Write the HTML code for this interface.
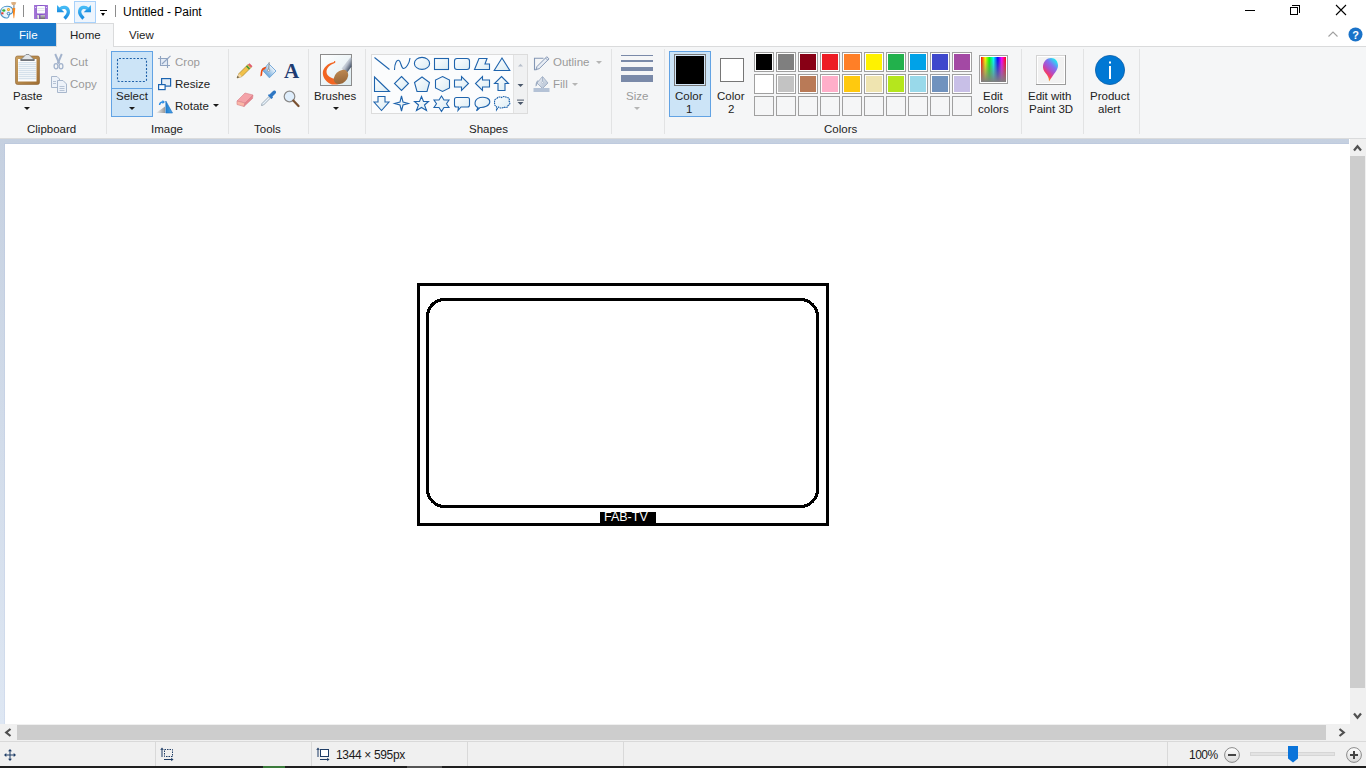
<!DOCTYPE html>
<html><head><meta charset="utf-8">
<style>
*{margin:0;padding:0;box-sizing:border-box}
html,body{width:1366px;height:768px;overflow:hidden;background:#fff;font-family:"Liberation Sans",sans-serif;font-size:11.5px;color:#222}
.a{position:absolute}
.t{position:absolute;white-space:nowrap;line-height:14px}
.sep{position:absolute;width:1px;background:#e2e3e4}
.dis{color:#9a9a9a}
.arr{position:absolute;width:0;height:0;border-left:3px solid transparent;border-right:3px solid transparent;border-top:3px solid #1a1a1a}
.sw{position:absolute;width:20px;height:20px;border:1px solid #a0a0a0;background:#fff;padding:1px}
.sw i{display:block;width:16px;height:16px}
</style></head><body>
<!-- title bar -->
<div class="a" style="left:0;top:0;width:1366px;height:23px;background:#fff"></div>
<div class="t" style="left:123px;top:5px;color:#000;font-size:12px">Untitled - Paint</div>


<!-- qat icons -->
<svg class="a" style="left:0;top:0" width="18" height="20" viewBox="0 0 18 20">
 <path d="M0.6 12 C0.6 8.5 3.5 6.3 7 6.3 C10.5 6.3 12.8 8 12.8 10.8 C12.8 13.5 11 14 9.8 14.3 C8.8 14.6 9.3 16.3 8.2 17.3 C7 18.3 4.3 17.8 2.5 16.5 C1.2 15.5 0.6 13.8 0.6 12Z" fill="#e9f4fc" stroke="#4b94c8" stroke-width="1.1"/>
 <ellipse cx="3.8" cy="10.5" rx="1.6" ry="1.2" fill="#3cb03c"/>
 <circle cx="8.5" cy="9.5" r="1.5" fill="#f2a516"/><circle cx="8.5" cy="9.5" r="0.5" fill="#ffe9a0"/>
 <rect x="1.3" y="12.3" width="2.2" height="2" fill="#e53b2c"/>
 <circle cx="8.5" cy="13.6" r="1.3" fill="none" stroke="#3d7fb8" stroke-width="1"/>
 <path d="M11 2.5 C12 1.8 15.5 1.8 16.3 2.5 L15.5 4.5 C14.5 5.3 12.5 5.3 11.8 4.5Z" fill="#dcae7e"/>
 <rect x="13.3" y="5" width="1.2" height="3" fill="#8a8a8a"/>
 <path d="M12.4 8.3 C13 7.8 14.8 7.8 15.3 8.3 L14.2 18.3 L13.6 18.3Z" fill="#f7861c"/>
</svg>
<div class="a" style="left:23px;top:5px;width:1px;height:12px;background:#8c8c8c"></div>
<svg class="a" style="left:34px;top:5px" width="15" height="15" viewBox="0 0 15 15">
 <defs><linearGradient id="sv" x1="0" y1="0" x2="1" y2="0"><stop offset="0" stop-color="#a77ad8"/><stop offset="0.5" stop-color="#8652c8"/><stop offset="1" stop-color="#a77ad8"/></linearGradient>
 <linearGradient id="sh" x1="0" y1="0" x2="0" y2="1"><stop offset="0" stop-color="#c8c8c8"/><stop offset="1" stop-color="#6a6a6a"/></linearGradient></defs>
 <rect x="0" y="0" width="14" height="14" fill="url(#sv)"/>
 <rect x="3" y="1" width="8" height="7.5" rx="0.8" fill="#fbfbfd"/>
 <rect x="3.5" y="3" width="7" height="0.6" fill="#d2d8e0"/><rect x="3.5" y="5" width="7" height="0.6" fill="#d2d8e0"/>
 <circle cx="1.6" cy="2.5" r="0.6" fill="#f0e8fa"/><circle cx="12.4" cy="2.5" r="0.6" fill="#f0e8fa"/>
 <rect x="3" y="10" width="8" height="4" fill="url(#sh)"/>
 <rect x="3.5" y="10.3" width="1.4" height="3.5" fill="#f0f0f0"/>
 <rect x="5.2" y="10" width="1.2" height="4" fill="#7d4fc0"/>
</svg>
<svg class="a" style="left:56px;top:4px" width="15" height="16" viewBox="0 0 15 16">
 <defs><linearGradient id="ug" x1="0" y1="0" x2="0" y2="1"><stop offset="0" stop-color="#45baf5"/><stop offset="1" stop-color="#1a8ce0"/></linearGradient></defs>
 <path d="M1 1 L1 8.3 L8.3 8.3Z" fill="url(#ug)"/>
 <path d="M4.2 5 C6.5 2.5 11.5 2.8 12.3 7 C12.8 9.8 11 12 8.5 14.5" fill="none" stroke="url(#ug)" stroke-width="3.3"/>
</svg>
<div class="a" style="left:74px;top:1px;width:22px;height:22px;background:#eef5fd;border:1px solid #a9d2fb"></div>
<svg class="a" style="left:77px;top:4px" width="15" height="16" viewBox="0 0 15 16">
 <path d="M14 1 L14 8.3 L6.7 8.3Z" fill="url(#ug)"/>
 <path d="M10.8 5 C8.5 2.5 3.5 2.8 2.7 7 C2.2 9.8 4 12 6.5 14.5" fill="none" stroke="url(#ug)" stroke-width="3.3"/>
</svg>
<div class="a" style="left:100px;top:10px;width:7px;height:1px;background:#000"></div>
<div class="arr" style="left:101px;top:13px;border-left-width:2.5px;border-right-width:2.5px;border-top:3px solid #000"></div>
<div class="a" style="left:115px;top:5px;width:1px;height:12px;background:#8c8c8c"></div>

<!-- window controls -->
<div class="a" style="left:1245px;top:10px;width:10px;height:1px;background:#000"></div>
<div class="a" style="left:1290px;top:7px;width:8px;height:8px;border:1px solid #000"></div>
<div class="a" style="left:1292px;top:5px;width:8px;height:8px;border-top:1px solid #000;border-right:1px solid #000"></div>
<svg class="a" style="left:1335px;top:4px" width="12" height="12" viewBox="0 0 12 12"><path d="M1 1 L11 11 M11 1 L1 11" stroke="#000" stroke-width="1.1"/></svg>
<svg class="a" style="left:1328px;top:31px" width="10" height="6" viewBox="0 0 10 6"><path d="M0.5 5.5 L5 1 L9.5 5.5" fill="none" stroke="#a0a0a0" stroke-width="1.1"/></svg>
<svg class="a" style="left:1348px;top:27px" width="15" height="15" viewBox="0 0 15 15"><circle cx="7.5" cy="7.5" r="7" fill="#1a73c9"/><text x="7.5" y="11.8" text-anchor="middle" font-family="Liberation Sans" font-weight="bold" font-size="11" fill="#fff">?</text></svg>

<!-- tab row -->
<div class="a" style="left:0;top:23px;width:56px;height:23px;background:#1979ca"></div>
<div class="t" style="left:19px;top:28px;color:#fff">File</div>
<div class="a" style="left:56px;top:23px;width:58px;height:24px;background:#f5f6f7;border:1px solid #dadbdc;border-bottom:none"></div>
<div class="t" style="left:70px;top:28px">Home</div>
<div class="t" style="left:129px;top:28px">View</div>

<!-- ribbon -->
<div class="a" style="left:0;top:46px;width:1366px;height:93px;background:#f5f6f7;border-top:1px solid #dadbdc;border-bottom:1px solid #dadbdc"></div>
<div class="a" style="left:57px;top:46px;width:56px;height:1px;background:#f5f6f7"></div>


<!-- ===== Clipboard ===== -->
<svg class="a" style="left:15px;top:54px" width="25" height="31" viewBox="0 0 25 31">
 <defs><linearGradient id="brd" x1="0" y1="0" x2="1" y2="1"><stop offset="0" stop-color="#c9a060"/><stop offset="1" stop-color="#a06e32"/></linearGradient></defs>
 <rect x="0.5" y="2" width="24" height="28.5" rx="2" fill="url(#brd)" stroke="#8d6334" stroke-width="0.6"/>
 <rect x="3" y="5" width="18.5" height="22.5" fill="#fdfdfd"/>
 <g fill="#c3d4e3"><rect x="3.5" y="8.3" width="17.5" height="0.9"/><rect x="3.5" y="10.3" width="17.5" height="0.9"/><rect x="3.5" y="12.3" width="17.5" height="0.9"/><rect x="3.5" y="14.3" width="17.5" height="0.9"/><rect x="3.5" y="16.3" width="17.5" height="0.9"/><rect x="3.5" y="18.3" width="17.5" height="0.9"/><rect x="3.5" y="20.3" width="17.5" height="0.9"/><rect x="3.5" y="22.3" width="17.5" height="0.9"/><rect x="3.5" y="24.3" width="17.5" height="0.9"/></g>
 <path d="M5.5 6 L9 2.5 L11 0.5 L14 0.5 L16 2.5 L19.5 6Z" fill="#e0e4e8" stroke="#6d7378" stroke-width="0.7"/>
 <rect x="5.5" y="5.5" width="14" height="1.2" fill="#4a4f55"/>
</svg>
<svg class="a" style="left:53px;top:53px" width="11" height="17" viewBox="0 0 11 17">
 <g fill="none" stroke="#a3b3cc">
 <path d="M2.2 1 L6.3 10.5" stroke-width="1.9"/><path d="M8.8 1 L4.7 10.5" stroke-width="1.9"/>
 <ellipse cx="3" cy="13.3" rx="1.9" ry="2.6" stroke-width="1.3"/><ellipse cx="8" cy="13.3" rx="1.9" ry="2.6" stroke-width="1.3"/></g>
</svg>
<div class="t dis" style="left:70px;top:55px">Cut</div>
<svg class="a" style="left:51px;top:76px" width="16" height="17" viewBox="0 0 16 17">
 <path d="M0.5 0.5 L6 0.5 L8.5 3 L8.5 11.5 L0.5 11.5Z" fill="#edf2f9" stroke="#a8b7cc" stroke-width="1"/>
 <path d="M6.5 4.5 L12 4.5 L15.5 8 L15.5 16.5 L6.5 16.5Z" fill="#edf2f9" stroke="#a8b7cc" stroke-width="1"/>
 <g fill="#a8b7cc"><rect x="8.5" y="10" width="5" height="0.8"/><rect x="8.5" y="12" width="5" height="0.8"/><rect x="8.5" y="14" width="5" height="0.8"/><rect x="2" y="5" width="3" height="0.8"/><rect x="2" y="7" width="3" height="0.8"/></g>
</svg>
<div class="t dis" style="left:70px;top:77px">Copy</div>
<div class="t" style="left:13px;top:89px">Paste</div>
<div class="arr" style="left:24px;top:107px"></div>
<div class="t" style="left:27px;top:122px">Clipboard</div>
<div class="sep" style="left:106px;top:49px;height:85px"></div>


<!-- ===== Image ===== -->
<div class="a" style="left:111px;top:51px;width:42px;height:66px;background:#cce4f7;border:1px solid #62a3e4"></div>
<div class="a" style="left:112px;top:88px;width:40px;height:1px;background:#62a3e4"></div>
<svg class="a" style="left:116px;top:57px" width="32" height="27" viewBox="0 0 32 27">
 <rect x="1.5" y="1.5" width="29" height="23" rx="1.5" fill="none" stroke="#1d5fa8" stroke-width="1.1" stroke-dasharray="2 1.6"/>
</svg>
<div class="t" style="left:116px;top:89px">Select</div>
<div class="arr" style="left:129px;top:107px"></div>
<svg class="a" style="left:157px;top:55px" width="15" height="14" viewBox="0 0 15 14">
 <rect x="3.5" y="3.5" width="7" height="7" fill="#e3ebf6"/>
 <g stroke="#90a4c1" stroke-width="1.1" fill="none"><path d="M1 3.5 H10.5 V13"/><path d="M3.5 1 V10.5 H13"/><path d="M5 9 L13.5 0.8"/></g>
</svg>
<div class="t dis" style="left:175px;top:55px">Crop</div>
<svg class="a" style="left:157px;top:77px" width="15" height="14" viewBox="0 0 15 14">
 <rect x="4.6" y="1.6" width="9" height="7.5" fill="#e6eff8" stroke="#1c64b0" stroke-width="1.2"/>
 <rect x="1.6" y="7.6" width="6.5" height="5" fill="#fff" stroke="#1c64b0" stroke-width="1.2"/>
</svg>
<div class="t" style="left:175px;top:77px">Resize</div>
<svg class="a" style="left:155px;top:100px" width="18" height="14" viewBox="0 0 18 14">
 <defs><linearGradient id="gt" x1="0" y1="0" x2="1" y2="0"><stop offset="0" stop-color="#f3f3f3"/><stop offset="1" stop-color="#9a9a9a"/></linearGradient>
 <linearGradient id="bt" x1="0" y1="0" x2="1" y2="0"><stop offset="0" stop-color="#1f7fd0"/><stop offset="1" stop-color="#4aa3e8"/></linearGradient></defs>
 <path d="M1 13 L10 6.5 L10 13Z" fill="url(#gt)"/>
 <path d="M10.8 1 L17.5 13 L10.8 13Z" fill="url(#bt)" stroke="#1c6fc0" stroke-width="0.6"/>
 <path d="M4.5 5 C4.8 2.5 6.5 1.8 8.5 2" fill="none" stroke="#2c8ee6" stroke-width="1.4"/>
 <path d="M7.5 0 L10 2 L7.5 4Z" fill="#2c8ee6"/>
</svg>
<div class="t" style="left:175px;top:99px">Rotate</div>
<div class="arr" style="left:213px;top:104px"></div>
<div class="t" style="left:151px;top:122px">Image</div>
<div class="sep" style="left:228px;top:49px;height:85px"></div>


<!-- ===== Tools ===== -->
<svg class="a" style="left:236px;top:63px" width="17" height="16" viewBox="0 0 17 16">
 <path d="M1 15 L3 10.5 L12 1.5 L15 4.5 L6 13.5Z" fill="#f0c14a" stroke="#a8822a" stroke-width="0.7"/>
 <path d="M1 15 L3 10.5 L6 13.5Z" fill="#f2d7a8"/>
 <path d="M1 15 L1.8 13 L3 14.2Z" fill="#333"/>
 <path d="M10.5 3 L13.5 6" stroke="#3c9a3c" stroke-width="1.6"/>
 <path d="M12 1.5 L13.5 0.3 L16.5 3.3 L15 4.5Z" fill="#e05a6a"/>
</svg>
<svg class="a" style="left:259px;top:61px" width="19" height="18" viewBox="0 0 19 18">
 <defs><linearGradient id="bk" x1="0.8" y1="0.2" x2="0.2" y2="0.8"><stop offset="0" stop-color="#ffffff"/><stop offset="1" stop-color="#5d9ed8"/></linearGradient></defs>
 <path d="M9.5 2.5 L17 10 L10.4 16.8 L3.8 9.6Z" fill="url(#bk)" stroke="#6aa3d6" stroke-width="0.9"/>
 <path d="M10.2 1.2 L9.7 8.5" stroke="#8c8c8c" stroke-width="1"/><circle cx="9.6" cy="9.3" r="1.1" fill="#fff" stroke="#8c8c8c" stroke-width="0.8"/>
 <path d="M7.5 5.8 C4 6 2 8 1.8 11 L1.3 15.5 L3 14.5 L3.5 10.5 C4 9 5 8.5 6 8.3Z" fill="#ea4a12"/>
</svg>
<div class="t" style="left:284px;top:60px;font-family:'Liberation Serif',serif;font-weight:bold;font-size:21px;line-height:22px;color:#1e3c72">A</div>
<svg class="a" style="left:236px;top:91px" width="18" height="16" viewBox="0 0 18 16">
 <path d="M1 10 L9 2 L17 4 L9 12Z" fill="#f4a3a9" stroke="#d98088" stroke-width="0.6"/>
 <path d="M1 10 L9 12 L8 15.5 L1 13.5Z" fill="#fbb7a7" stroke="#d98088" stroke-width="0.6"/>
 <path d="M9 12 L17 4 L16.5 7.5 L8 15.5Z" fill="#e7848e" stroke="#d98088" stroke-width="0.6"/>
</svg>
<svg class="a" style="left:260px;top:90px" width="17" height="17" viewBox="0 0 17 17">
 <path d="M1.5 15.5 L2 13.5 L9 6.5 L10.5 8 L3.5 15Z" fill="#e8f2fb" stroke="#8a9aa8" stroke-width="0.8"/>
 <path d="M8 5.5 L11.5 9 L13 7.5 L12.5 6.5 L15.5 3.5 C16.5 2.5 16 1.2 15.3 0.8 C14.5 0.2 13.5 0.5 12.5 1.5 L9.5 4.5 L8.7 4.2Z" fill="#2f78c4"/>
</svg>
<svg class="a" style="left:283px;top:90px" width="17" height="18" viewBox="0 0 17 18">
 <circle cx="6.5" cy="6.5" r="5.3" fill="#dfeefc" stroke="#8a8a8a" stroke-width="1.2"/>
 <path d="M10.3 10.5 L15.5 16" stroke="#7a5030" stroke-width="2.2" stroke-linecap="round"/>
</svg>
<div class="t" style="left:254px;top:122px">Tools</div>
<div class="sep" style="left:308px;top:49px;height:85px"></div>

<!-- ===== Brushes ===== -->
<svg class="a" style="left:320px;top:54px" width="32" height="32" viewBox="0 0 32 32">
 <defs><linearGradient id="bbg" x1="0" y1="0" x2="1" y2="1"><stop offset="0" stop-color="#ffffff"/><stop offset="1" stop-color="#dcebf0"/></linearGradient>
 <linearGradient id="bh" x1="0" y1="0" x2="1" y2="1"><stop offset="0" stop-color="#c48e55"/><stop offset="1" stop-color="#8e6035"/></linearGradient>
 <linearGradient id="hd" x1="0.2" y1="0.2" x2="0.8" y2="0.8"><stop offset="0" stop-color="#f5f7fa"/><stop offset="0.5" stop-color="#b7c0cc"/><stop offset="1" stop-color="#3e4c62"/></linearGradient></defs>
 <rect x="0.5" y="0.5" width="31" height="31" fill="url(#bbg)" stroke="#8c8c8c"/>
 <path d="M14 7 C15.5 6.8 16 8 14.8 9 C10 10.5 6.5 14 6.5 18 C6.8 22 11 24.5 16 25 L18 30.5 L12 30.5 C7 28.5 2.8 24.5 2.8 19 C2.8 13.5 8.5 9 13.5 8.2 C14.2 8 14.2 7.5 14 7Z" fill="#f26522"/>
 <path d="M21.5 14.5 L30.5 3.2 L31.5 4.5 L31.5 12.5 L26.5 19.5Z" fill="url(#hd)"/>
 <ellipse cx="21" cy="23" rx="6" ry="8.2" transform="rotate(45 21 23)" fill="url(#bh)"/>
</svg>
<div class="t" style="left:314px;top:89px">Brushes</div>
<div class="arr" style="left:333px;top:107px"></div>
<div class="sep" style="left:365px;top:49px;height:85px"></div>


<!-- ===== Shapes ===== -->
<div class="a" style="left:371px;top:54px;width:157px;height:60px;background:#fbfcfd;border:1px solid #dcdcdc"></div>
<div class="a" style="left:513px;top:55px;width:14px;height:58px;background:#f0f1f2;border-left:1px solid #e2e2e2"></div>
<svg class="a" style="left:371px;top:54px" width="157" height="60" viewBox="371 54 157 60">
 <defs><linearGradient id="sf" x1="0" y1="0" x2="1" y2="1"><stop offset="0" stop-color="#ffffff"/><stop offset="1" stop-color="#d9ebf3"/></linearGradient></defs>
 <g fill="url(#sf)" stroke="#1f64ad" stroke-width="1.1" stroke-linejoin="miter">
 <path d="M374.5 57.5 L389.5 69.5" fill="none"/>
 <path d="M394.5 70 C394.5 63 397 59.5 399 60.5 C401 61.5 401 68 403.5 68.5 C406 69 409.5 63 410 58" fill="none"/>
 <ellipse cx="422" cy="63.4" rx="7.6" ry="6"/>
 <rect x="434.5" y="58.5" width="14" height="11"/>
 <rect x="454.5" y="58.5" width="15" height="11" rx="2.5"/>
 <path d="M474.5 69.5 L479 58.5 L487 58.5 L485 64 L489.5 64 L489.5 69.5Z"/>
 <path d="M502 58 L509.8 70.5 L494.2 70.5Z"/>
 <path d="M374.5 77 L389.5 91.5 L374.5 91.5Z"/>
 <path d="M401.5 76.5 L408.5 83.5 L401.5 90.5 L394.5 83.5Z"/>
 <path d="M422 77 L429.5 82.5 L427 91.5 L417 91.5 L414.5 82.5Z"/>
 <path d="M442.5 76.5 L449.5 80 L449.5 88 L442.5 91.5 L435.5 88 L435.5 80Z"/>
 <path d="M454.5 80 L461.5 80 L461.5 76.5 L468.5 83.5 L461.5 90.5 L461.5 87 L454.5 87Z"/>
 <path d="M489.5 80 L482.5 80 L482.5 76.5 L475.5 83.5 L482.5 90.5 L482.5 87 L489.5 87Z"/>
 <path d="M501.5 76.5 L508.5 83.5 L505 83.5 L505 90.5 L498 90.5 L498 83.5 L494.5 83.5Z"/>
 <path d="M378 96.5 L385 96.5 L385 102 L389 102 L381.5 110.5 L374 102 L378 102Z"/>
 <path d="M401.5 96 L403 102 L408.5 103.5 L403 105 L401.5 111 L400 105 L394.5 103.5 L400 102Z"/>
 <path d="M421.5 96.5 L423.5 101.5 L428.5 101.5 L424.5 105 L426.5 110.5 L421.5 107.5 L416.5 110.5 L418.5 105 L414.5 101.5 L419.5 101.5Z"/>
 <path d="M441.5 96 L444 100 L449 100 L446.5 103.8 L449 107.5 L444 107.5 L441.5 111.5 L439 107.5 L434 107.5 L436.5 103.8 L434 100 L439 100Z"/>
 <path d="M456.5 97.5 L467.5 97.5 Q469.5 97.5 469.5 99.5 L469.5 105 Q469.5 107 467.5 107 L461 107 L458 110.5 L458.5 107 L456.5 107 Q454.5 107 454.5 105 L454.5 99.5 Q454.5 97.5 456.5 97.5Z"/>
 <path d="M478 107.5 C474 106 473.5 99.5 480 97.5 C485 96.5 490 98.5 489.8 102 C489.5 106 484 107.8 480 107.5 L476.5 110.8Z"/>
 <path d="M497 98.5 C498 96.5 500.5 97 501.5 97.5 C503 96 505.5 96.5 506.5 97.5 C509 97.5 510 99.5 509 101 C510.5 102.5 510 105 508 105.5 C508 107.5 505.5 108 504 107 C502.5 108.5 499.5 108 498.5 107 L496.5 110 L496.5 106.5 C494.5 106 494 103.5 495 102.5 C494 101 494.5 99 497 98.5Z" stroke-dasharray="1.6 0.6"/>
 </g>
 <path d="M518 66.5 L520.5 63.8 L523 66.5Z" fill="#b8c0cc"/>
 <path d="M517.5 84 L520.5 87 L523.5 84Z" fill="#4b586b"/>
 <rect x="517" y="99.6" width="7" height="1" fill="#4b586b"/><path d="M517.5 102 L520.5 105 L523.5 102Z" fill="#4b586b"/>
</svg>
<div class="t" style="left:469px;top:122px">Shapes</div>
<svg class="a" style="left:533px;top:55px" width="18" height="16" viewBox="0 0 18 16">
 <path d="M10.5 3.3 L1.5 3.3 L1.5 14.8 L3.5 14.8" fill="none" stroke="#8497b5" stroke-width="1.1"/>
 <path d="M3 14.5 L4 11.5 L13.8 1.7 L16 3.9 L6.2 13.7Z" fill="#e9eef5" stroke="#8497b5" stroke-width="1"/>
 <path d="M12.5 3 L14.7 5.2" stroke="#8497b5" stroke-width="0.9"/>
</svg>
<div class="t dis" style="left:553px;top:55px">Outline</div>
<div class="arr" style="left:596px;top:61px;border-top-color:#b5b5b5"></div>
<svg class="a" style="left:533px;top:75px" width="18" height="18" viewBox="0 0 18 18">
 <defs><linearGradient id="fb" x1="0" y1="0" x2="1" y2="1"><stop offset="0" stop-color="#f4f6fa"/><stop offset="1" stop-color="#a9b8cc"/></linearGradient></defs>
 <path d="M9.5 1.5 L15 8 L9.5 13.5 L4 8Z" fill="url(#fb)" stroke="#9eadc3" stroke-width="0.9"/>
 <path d="M9.6 2 L9.6 7" stroke="#9eadc3" stroke-width="0.9"/><circle cx="9.6" cy="7.5" r="0.9" fill="#fff" stroke="#9eadc3" stroke-width="0.6"/>
 <path d="M5.5 5 C3.5 5.5 2.5 7.5 2.5 11.5 L4 10.5 L4.5 7.5Z" fill="#9eadc3"/>
 <rect x="0.5" y="13" width="16" height="4" fill="#b4c2d6"/>
</svg>
<div class="t dis" style="left:553px;top:77px">Fill</div>
<div class="arr" style="left:572px;top:83px;border-top-color:#b5b5b5"></div>
<div class="sep" style="left:611px;top:49px;height:85px"></div>

<!-- ===== Size ===== -->
<div class="a" style="left:621px;top:55px;width:32px;height:1px;background:#7a8aa9"></div>
<div class="a" style="left:621px;top:60px;width:32px;height:2px;background:#7a8aa9"></div>
<div class="a" style="left:621px;top:67px;width:32px;height:4px;background:#7a8aa9"></div>
<div class="a" style="left:621px;top:75px;width:32px;height:7px;background:#7a8aa9"></div>
<div class="t dis" style="left:626px;top:89px">Size</div>
<div class="arr" style="left:634px;top:107px;border-top-color:#b5b5b5"></div>
<div class="sep" style="left:664px;top:49px;height:85px"></div>


<!-- ===== Colors ===== -->
<div class="a" style="left:669px;top:51px;width:42px;height:66px;background:#cce4f7;border:1px solid #62a3e4"></div>
<div class="a" style="left:674px;top:54px;width:32px;height:32px;border:1px solid #7a7a7a;background:#d2e6f8;padding:1px"><div style="width:28px;height:28px;background:#000"></div></div>
<div class="t" style="left:675px;top:89px">Color</div>
<div class="t" style="left:686px;top:102px">1</div>
<div class="a" style="left:720px;top:58px;width:24px;height:24px;border:1px solid #767676;background:#fff"></div>
<div class="t" style="left:717px;top:89px">Color</div>
<div class="t" style="left:728px;top:102px">2</div>
<div class="sw" style="left:754px;top:52px"><i style="background:#000000"></i></div>
<div class="sw" style="left:776px;top:52px"><i style="background:#7f7f7f"></i></div>
<div class="sw" style="left:798px;top:52px"><i style="background:#880015"></i></div>
<div class="sw" style="left:820px;top:52px"><i style="background:#ed1c24"></i></div>
<div class="sw" style="left:842px;top:52px"><i style="background:#ff7f27"></i></div>
<div class="sw" style="left:864px;top:52px"><i style="background:#fff200"></i></div>
<div class="sw" style="left:886px;top:52px"><i style="background:#22b14c"></i></div>
<div class="sw" style="left:908px;top:52px"><i style="background:#00a2e8"></i></div>
<div class="sw" style="left:930px;top:52px"><i style="background:#3f48cc"></i></div>
<div class="sw" style="left:952px;top:52px"><i style="background:#a349a4"></i></div>
<div class="sw" style="left:754px;top:74px"><i style="background:#ffffff"></i></div>
<div class="sw" style="left:776px;top:74px"><i style="background:#c3c3c3"></i></div>
<div class="sw" style="left:798px;top:74px"><i style="background:#b97a57"></i></div>
<div class="sw" style="left:820px;top:74px"><i style="background:#ffaec9"></i></div>
<div class="sw" style="left:842px;top:74px"><i style="background:#ffc90e"></i></div>
<div class="sw" style="left:864px;top:74px"><i style="background:#efe4b0"></i></div>
<div class="sw" style="left:886px;top:74px"><i style="background:#b5e61d"></i></div>
<div class="sw" style="left:908px;top:74px"><i style="background:#99d9ea"></i></div>
<div class="sw" style="left:930px;top:74px"><i style="background:#7092be"></i></div>
<div class="sw" style="left:952px;top:74px"><i style="background:#c8bfe7"></i></div>
<div class="a" style="left:754px;top:96px;width:20px;height:20px;border:1px solid #a0a0a0;background:#f5f6f7"></div>
<div class="a" style="left:776px;top:96px;width:20px;height:20px;border:1px solid #a0a0a0;background:#f5f6f7"></div>
<div class="a" style="left:798px;top:96px;width:20px;height:20px;border:1px solid #a0a0a0;background:#f5f6f7"></div>
<div class="a" style="left:820px;top:96px;width:20px;height:20px;border:1px solid #a0a0a0;background:#f5f6f7"></div>
<div class="a" style="left:842px;top:96px;width:20px;height:20px;border:1px solid #a0a0a0;background:#f5f6f7"></div>
<div class="a" style="left:864px;top:96px;width:20px;height:20px;border:1px solid #a0a0a0;background:#f5f6f7"></div>
<div class="a" style="left:886px;top:96px;width:20px;height:20px;border:1px solid #a0a0a0;background:#f5f6f7"></div>
<div class="a" style="left:908px;top:96px;width:20px;height:20px;border:1px solid #a0a0a0;background:#f5f6f7"></div>
<div class="a" style="left:930px;top:96px;width:20px;height:20px;border:1px solid #a0a0a0;background:#f5f6f7"></div>
<div class="a" style="left:952px;top:96px;width:20px;height:20px;border:1px solid #a0a0a0;background:#f5f6f7"></div>

<svg class="a" style="left:979px;top:55px" width="29" height="29" viewBox="0 0 29 29">
 <defs><linearGradient id="hue" x1="0" y1="0" x2="1" y2="0">
 <stop offset="0" stop-color="#ff0000"/><stop offset="0.17" stop-color="#ffff00"/><stop offset="0.33" stop-color="#00ff00"/><stop offset="0.5" stop-color="#00ffff"/><stop offset="0.67" stop-color="#0000ff"/><stop offset="0.83" stop-color="#ff00ff"/><stop offset="1" stop-color="#ff0000"/></linearGradient>
 <linearGradient id="gry" x1="0" y1="0" x2="0" y2="1"><stop offset="0" stop-color="#808080" stop-opacity="0"/><stop offset="1" stop-color="#808080" stop-opacity="1"/></linearGradient></defs>
 <rect x="0.5" y="0.5" width="28" height="28" fill="#fff" stroke="#a0a0a0"/>
 <rect x="2" y="2" width="25" height="25" fill="url(#hue)"/>
 <rect x="2" y="2" width="25" height="25" fill="url(#gry)"/>
</svg>
<div class="t" style="left:983px;top:89px">Edit</div>
<div class="t" style="left:978px;top:102px">colors</div>
<div class="sep" style="left:1021px;top:49px;height:85px"></div>
<div class="t" style="left:824px;top:122px">Colors</div>

<!-- ===== Paint 3D ===== -->
<svg class="a" style="left:1036px;top:55px" width="30" height="30" viewBox="0 0 30 30">
 <defs><linearGradient id="p3" x1="0.85" y1="0.1" x2="0.3" y2="0.95"><stop offset="0" stop-color="#22e6f2"/><stop offset="0.3" stop-color="#7f72f2"/><stop offset="0.55" stop-color="#b04ec8"/><stop offset="0.78" stop-color="#f03a6e"/><stop offset="1" stop-color="#ffae00"/></linearGradient></defs>
 <rect x="0" y="0" width="30" height="30" fill="#9c9c9c"/>
 <rect x="0" y="0" width="29" height="29" fill="#d4d4d4"/>
 <rect x="1" y="1" width="28" height="28" fill="#fff"/>
 <rect x="2" y="2" width="26" height="26" fill="#f2f2f2"/>
 <path d="M15 3 C19.5 3 22 6.5 22 10.5 C22 15 18 18.5 13 26.5 C13 22.5 11.5 20.5 9.5 18 C7.5 15.5 6.8 13.5 7 11 C7.5 6.5 10.8 3 15 3Z" fill="url(#p3)"/>
</svg>
<div class="t" style="left:1028px;top:89px">Edit with</div>
<div class="t" style="left:1029px;top:102px">Paint 3D</div>
<div class="sep" style="left:1083px;top:49px;height:85px"></div>

<!-- ===== Product alert ===== -->
<svg class="a" style="left:1095px;top:55px" width="30" height="30" viewBox="0 0 30 30">
 <circle cx="15" cy="15" r="14.6" fill="#0078d4" stroke="#0a5ea8" stroke-width="0.8"/>
 <rect x="14" y="11" width="2" height="13" fill="#fff"/><rect x="14" y="6.5" width="2" height="2" fill="#fff"/>
</svg>
<div class="t" style="left:1090px;top:89px">Product</div>
<div class="t" style="left:1098px;top:102px">alert</div>
<div class="sep" style="left:1139px;top:49px;height:85px"></div>

<!-- canvas area -->
<div class="a" style="left:0;top:139px;width:1349px;height:585px;background:linear-gradient(#c5d0e0,#dee7f3)"></div>
<div class="a" style="left:4px;top:143px;width:1345px;height:581px;background:rgba(160,180,215,0.18)"></div>
<div class="a" style="left:5px;top:144px;width:1345px;height:580px;background:#fff"></div>


<!-- drawing -->
<div class="a" style="left:417px;top:283px;width:412px;height:243px;border:3px solid #000"></div>
<svg class="a" style="left:426px;top:298px" width="393" height="210" viewBox="0 0 393 210" shape-rendering="crispEdges"><rect x="1.5" y="1.5" width="390" height="207" rx="17" ry="17" fill="none" stroke="#000" stroke-width="3"/></svg>
<div class="a" style="left:600px;top:512px;width:56px;height:12px;background:#000;overflow:hidden"><div class="t" style="left:4px;top:-2px;color:#fff;font-size:12.5px">FAB-TV</div></div>

<!-- vertical scrollbar -->
<div class="a" style="left:1350px;top:139px;width:16px;height:585px;background:#f0f0f0"></div>
<div class="a" style="left:1350px;top:156px;width:15px;height:532px;background:#cdcdcd"></div>
<!-- horizontal scrollbar -->
<div class="a" style="left:0;top:724px;width:1366px;height:17px;background:#f0f0f0"></div>
<div class="a" style="left:17px;top:725px;width:1309px;height:15px;background:#cdcdcd"></div>


<svg class="a" style="left:1353px;top:144px" width="9" height="8" viewBox="0 0 9 8"><path d="M1 6.5 L4.5 2.2 L8 6.5" fill="none" stroke="#505050" stroke-width="2.2"/></svg>
<svg class="a" style="left:1353px;top:712px" width="9" height="8" viewBox="0 0 9 8"><path d="M1 1.5 L4.5 5.8 L8 1.5" fill="none" stroke="#505050" stroke-width="2.2"/></svg>
<svg class="a" style="left:4px;top:728px" width="8" height="9" viewBox="0 0 8 9"><path d="M6.5 1 L2.2 4.5 L6.5 8" fill="none" stroke="#505050" stroke-width="2.2"/></svg>
<svg class="a" style="left:1338px;top:728px" width="8" height="9" viewBox="0 0 8 9"><path d="M1.5 1 L5.8 4.5 L1.5 8" fill="none" stroke="#505050" stroke-width="2.2"/></svg>

<!-- status bar -->
<div class="a" style="left:0;top:741px;width:1366px;height:25px;background:#f0f0f0;border-top:1px solid #d9d9d9"></div>
<div class="a" style="left:0;top:766px;width:1366px;height:2px;background:#1f1f1f"></div>

<svg class="a" style="left:4px;top:749px" width="12" height="12" viewBox="0 0 12 12">
 <g fill="#1f3d66"><rect x="5.5" y="1.5" width="1" height="9"/><rect x="1.5" y="5.5" width="9" height="1"/>
 <path d="M6 0 L8 2.3 L4 2.3Z"/><path d="M6 12 L8 9.7 L4 9.7Z"/><path d="M0 6 L2.3 4 L2.3 8Z"/><path d="M12 6 L9.7 4 L9.7 8Z"/></g>
</svg>
<div class="a" style="left:155px;top:742px;width:1px;height:24px;background:#d9d9d9"></div>
<svg class="a" style="left:160px;top:747px" width="15" height="15" viewBox="0 0 15 15">
 <g fill="#1f3d66"><rect x="1.5" y="2" width="1" height="8"/><path d="M2 0.5 L3.8 2.8 L0.2 2.8Z"/><rect x="4" y="12" width="8" height="1"/><path d="M13.5 12.5 L11.2 10.7 L11.2 14.3Z"/></g>
 <rect x="4.5" y="2.5" width="8" height="7" fill="none" stroke="#1f3d66" stroke-width="1" stroke-dasharray="1.5 1"/>
</svg>
<div class="a" style="left:311px;top:742px;width:1px;height:24px;background:#d9d9d9"></div>
<svg class="a" style="left:316px;top:747px" width="15" height="15" viewBox="0 0 15 15">
 <g fill="#1f3d66"><rect x="1.5" y="2" width="1" height="8"/><path d="M2 0.5 L3.8 2.8 L0.2 2.8Z"/><rect x="4" y="12" width="8" height="1"/><path d="M13.5 12.5 L11.2 10.7 L11.2 14.3Z"/></g>
 <rect x="4.5" y="2.5" width="8" height="7" fill="#fff" stroke="#1f3d66" stroke-width="1"/>
</svg>
<div class="t" style="left:336px;top:748px;color:#1a1a1a;font-size:12px;letter-spacing:-0.35px">1344 × 595px</div>
<div class="a" style="left:467px;top:742px;width:1px;height:24px;background:#d9d9d9"></div>
<div class="a" style="left:623px;top:742px;width:1px;height:24px;background:#d9d9d9"></div>
<div class="a" style="left:1167px;top:742px;width:1px;height:24px;background:#d9d9d9"></div>
<div class="t" style="left:1189px;top:748px;color:#1a1a1a;font-size:12px;letter-spacing:-0.5px">100%</div>
<svg class="a" style="left:1224px;top:747px" width="16" height="16" viewBox="0 0 16 16"><defs><linearGradient id="zg" x1="0" y1="0" x2="0" y2="1"><stop offset="0" stop-color="#ffffff"/><stop offset="1" stop-color="#d8d8d8"/></linearGradient></defs><circle cx="8" cy="8" r="7.4" fill="url(#zg)" stroke="#8a8a8a" stroke-width="1"/><rect x="4" y="7" width="8" height="2" fill="#444"/></svg>
<div class="a" style="left:1250px;top:752px;width:85px;height:4px;background:#e3e3e3;border:1px solid #d6d6d6"></div>
<svg class="a" style="left:1288px;top:746px" width="10" height="17" viewBox="0 0 10 17"><path d="M0 0 H10 V12.5 L5 16.5 L0 12.5Z" fill="#0a74da"/></svg>
<svg class="a" style="left:1346px;top:747px" width="16" height="16" viewBox="0 0 16 16"><circle cx="8" cy="8" r="7.4" fill="url(#zg)" stroke="#8a8a8a" stroke-width="1"/><rect x="4" y="7" width="8" height="2" fill="#444"/><rect x="7" y="4" width="2" height="8" fill="#444"/></svg>
<div class="a" style="left:263px;top:766px;width:22px;height:2px;background:#3b7a3b"></div>
<div class="a" style="left:407px;top:766px;width:35px;height:2px;background:#555"></div>

</body></html>
